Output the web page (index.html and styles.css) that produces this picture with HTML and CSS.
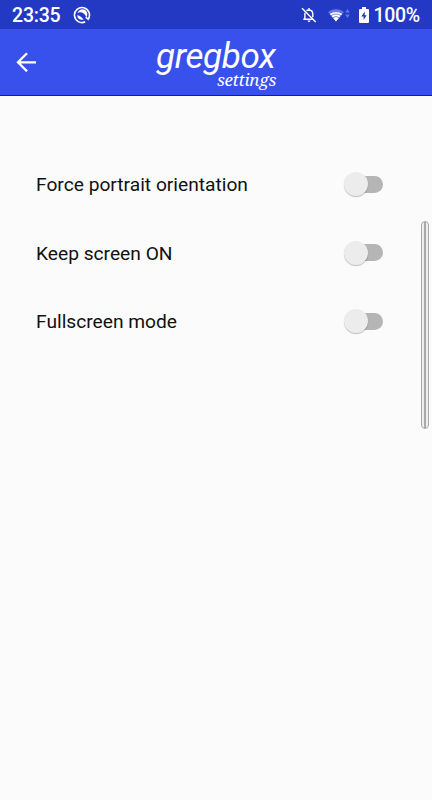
FILE: index.html
```html
<!DOCTYPE html>
<html lang="en">
<head>
<meta charset="utf-8">
<title>gregbox settings</title>
<link rel="stylesheet" href="styles.css">
</head>
<body>
<div class="status">
  <span class="clock">23:35</span>
  <svg class="app-icon" width="18" height="18" viewBox="0 0 18 18" fill="none" stroke="#fff">
    <path d="M12.2 15.8A7.5 7.5 0 1 1 15.2 13.2L12.6 11" stroke-width="1.6"/>
    <path d="M4.4 7.6A5 5 0 1 1 13.4 11.2Q11.5 6.8 7.7 6.2Q5.6 6 4.4 7.6Z" fill="#fff" stroke="none"/>
    <path d="M4.2 9.2Q6.2 9 7.8 10.8L10.7 13.5Q6.5 14.6 4.6 11.5Z" fill="#fff" stroke="none"/>
  </svg>
  <span class="grow"></span>
  <svg class="bell" width="16" height="16" viewBox="0 0 16 16" fill="none" stroke="#fff" stroke-width="1.4">
    <path d="M1 1.2L14.7 15"/>
    <path d="M5.5 3.6Q6.2 3 8 3Q11.8 3.2 11.8 7.2V10.3M3.9 5.8V12.2H12M2.3 12.2H4M8 1V3"/>
    <path d="M6.5 13.5H9.5Q9.2 15 8 15Q6.8 15 6.5 13.5Z" fill="#fff" stroke="none"/>
  </svg>
  <svg class="wifi" width="22" height="14" viewBox="0 0 22 14">
    <path d="M0 4Q8-2 16 4L8 13.5Z" fill="#6677dd"/>
    <path d="M1.8 6Q8 1.8 14.2 6L8 13.5Z" fill="#fff"/>
    <path d="M3 7.7Q8 4.3 13 7.7M4.6 9.7Q8 7.4 11.4 9.7" fill="none" stroke="#2339c4" stroke-width=".6"/>
    <path d="M17.2 4.5L19.5 1L21.8 4.5ZM17.2 6.5L19.5 10L21.8 6.5Z" fill="#6677dd"/>
  </svg>
  <svg class="battery" width="10" height="16" viewBox="0 0 10 16">
    <path d="M3 0H7V2H9Q10 2 10 3V15Q10 16 9 16H1Q0 16 0 15V3Q0 2 1 2H3Z" fill="#fff"/>
    <path d="M5.7 4.5L2.3 9.6H4.6V13L7.7 8.2H5.7Z" fill="#2339c4"/>
  </svg>
  <span class="percent">100%</span>
</div>
<header class="header">
  <svg class="back" width="20" height="20" viewBox="0 0 20 20" fill="none" stroke="#fff" stroke-width="2.3">
    <path d="M20 10.3H2.5M11 1.3L2 10.3L11 19.3"/>
  </svg>
  <div class="brand"><span class="name">gregbox</span><span class="subtitle">settings</span></div>
</header>
<main class="content">
  <div class="options">
    <div class="row"><span class="label">Force portrait orientation</span><span class="switch"><span class="thumb"></span></span></div>
    <div class="row"><span class="label">Keep screen ON</span><span class="switch"><span class="thumb"></span></span></div>
    <div class="row"><span class="label">Fullscreen mode</span><span class="switch"><span class="thumb"></span></span></div>
  </div>
  <div class="scrollbar"></div>
</main>
</body>
</html>
```
FILE: styles.css
```css
* { box-sizing: border-box; }
body { margin: 0; height: 800px; overflow: hidden; background: #fbfbfb; color: #111; font-family: Roboto, sans-serif; }
.status { display: flex; align-items: center; height: 29px; padding: 1px 12px 0; background: #2339c4; color: #fff; }
.clock { width: 61px; font-size: 19.5px; letter-spacing: -.2px; font-weight: 500; line-height: 29px; }
.app-icon { flex: none; }
.grow { flex: 1; }
.bell { flex: none; margin-right: 11px; }
.wifi { flex: none; margin-right: 9px; }
.battery { flex: none; margin-right: 4.5px; }
.percent { width: 46.5px; font-size: 19.5px; letter-spacing: -.3px; font-weight: 500; line-height: 29px; white-space: nowrap; }
.header { display: flex; height: 67px; padding-left: 16px; background: #3851ec; border-bottom: 1px solid #0b18c8; color: #fff; }
.back { flex: none; margin-top: 23px; }
.brand { display: flex; flex-direction: column; width: 120px; margin-left: 120px; padding-top: 12px; }
.name { font-size: 35px; letter-spacing: -.4px; line-height: 32px; font-style: italic; white-space: nowrap; }
.subtitle { align-self: flex-end; margin-top: -2px; font: italic 17px/17px "Noto Serif", "Liberation Serif", serif; letter-spacing: -.3px; }
.content { display: flex; }
.options { width: 384px; margin-left: 36px; padding-top: 54px; }
.row { display: flex; align-items: center; justify-content: space-between; width: 346.5px; height: 68.5px; }
.label { padding-top: 2px; font-size: 19.2px; line-height: 24px; white-space: nowrap; }
.switch { display: flex; align-items: center; width: 37px; height: 17px; border-radius: 9px; background: #b5b5b5; }
.thumb { width: 24px; height: 24px; flex: none; margin-left: -1.5px; border-radius: 50%; background: #ececec; box-shadow: 0 1px 1px rgba(0,0,0,.25); }
.scrollbar { width: 8px; height: 208px; margin: 125px 0 0 1px; border: 1px solid #aaa; border-radius: 4px; background: linear-gradient(90deg, #eee 0 2px, #aaa 2px 4px, #eee 4px); }
```
